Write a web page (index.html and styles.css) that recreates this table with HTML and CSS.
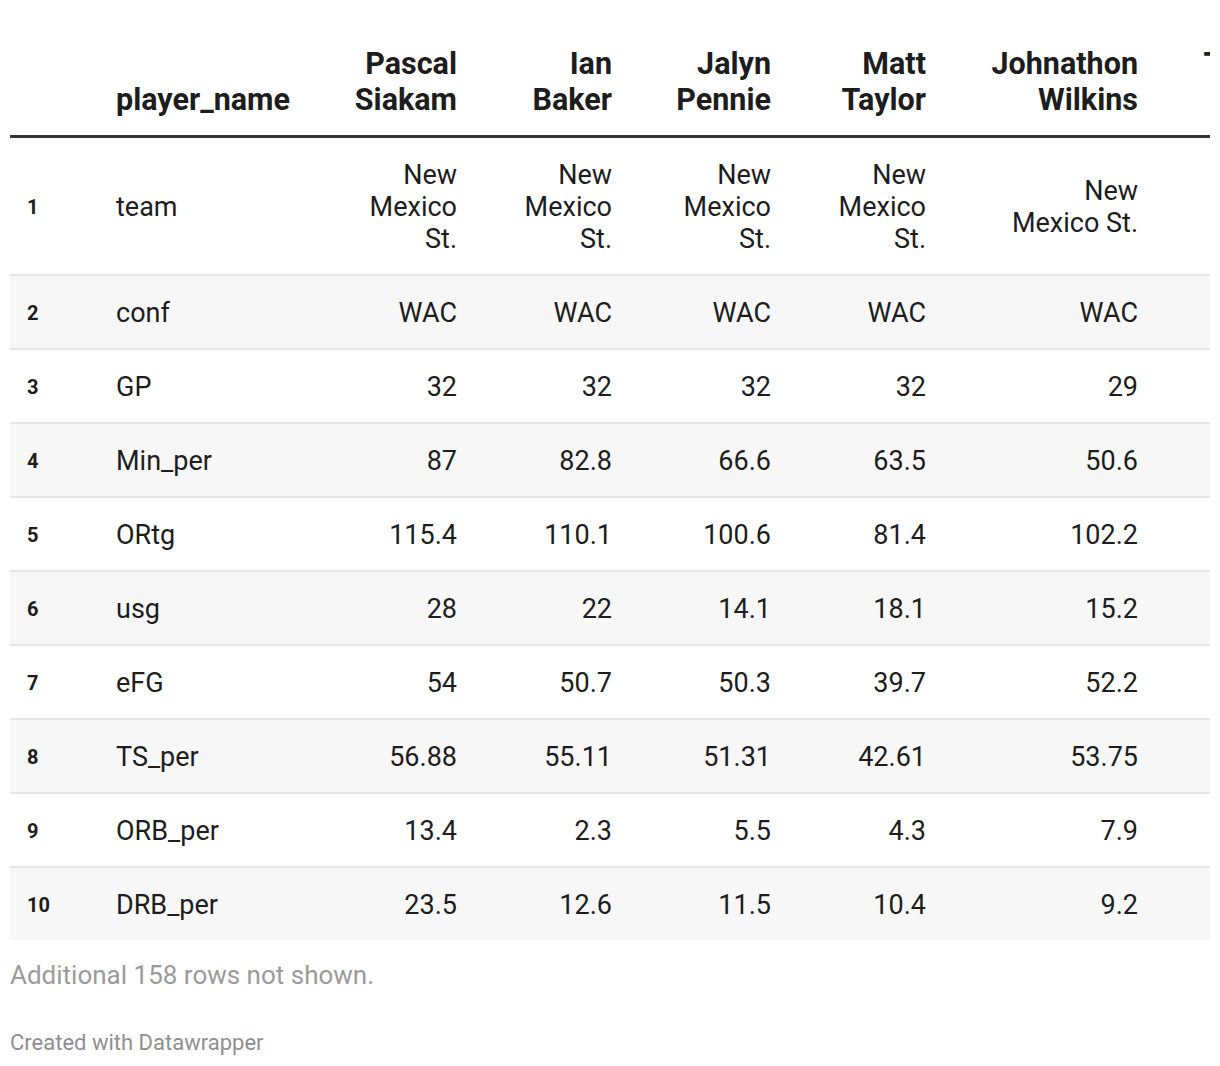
FILE: index.html
```html
<!DOCTYPE html>
<html>
<head>
<meta charset="utf-8">
<link rel="stylesheet" href="styles.css">
</head>
<body>
<div class="chart">
  <div class="table-wrap">
    <table class="dw-table">
      <colgroup>
        <col class="c-idx"><col class="c-label"><col class="c-p1"><col class="c-p2"><col class="c-p3"><col class="c-p4"><col class="c-p5"><col class="c-p6">
      </colgroup>
      <thead>
        <tr>
          <th class="idx"></th>
          <th class="label">player_name</th>
          <th>Pascal Siakam</th>
          <th>Ian Baker</th>
          <th>Jalyn Pennie</th>
          <th>Matt Taylor</th>
          <th>Johnathon Wilkins</th>
          <th>Tanveer Bhullar</th>
        </tr>
      </thead>
      <tbody>
        <tr><td class="idx">1</td><td class="label">team</td><td>New Mexico St.</td><td>New Mexico St.</td><td>New Mexico St.</td><td>New Mexico St.</td><td>New Mexico St.</td><td>New Mexico St.</td></tr>
        <tr><td class="idx">2</td><td class="label">conf</td><td>WAC</td><td>WAC</td><td>WAC</td><td>WAC</td><td>WAC</td><td>WAC</td></tr>
        <tr><td class="idx">3</td><td class="label">GP</td><td>32</td><td>32</td><td>32</td><td>32</td><td>29</td><td>19</td></tr>
        <tr><td class="idx">4</td><td class="label">Min_per</td><td>87</td><td>82.8</td><td>66.6</td><td>63.5</td><td>50.6</td><td>22.3</td></tr>
        <tr><td class="idx">5</td><td class="label">ORtg</td><td>115.4</td><td>110.1</td><td>100.6</td><td>81.4</td><td>102.2</td><td>98.1</td></tr>
        <tr><td class="idx">6</td><td class="label">usg</td><td>28</td><td>22</td><td>14.1</td><td>18.1</td><td>15.2</td><td>21</td></tr>
        <tr><td class="idx">7</td><td class="label">eFG</td><td>54</td><td>50.7</td><td>50.3</td><td>39.7</td><td>52.2</td><td>50</td></tr>
        <tr><td class="idx">8</td><td class="label">TS_per</td><td>56.88</td><td>55.11</td><td>51.31</td><td>42.61</td><td>53.75</td><td>53.3</td></tr>
        <tr><td class="idx">9</td><td class="label">ORB_per</td><td>13.4</td><td>2.3</td><td>5.5</td><td>4.3</td><td>7.9</td><td>10.2</td></tr>
        <tr><td class="idx">10</td><td class="label">DRB_per</td><td>23.5</td><td>12.6</td><td>11.5</td><td>10.4</td><td>9.2</td><td>14.1</td></tr>
      </tbody>
    </table>
  </div>
  <p class="notes">Additional 158 rows not shown.</p>
  <p class="credit">Created with Datawrapper</p>
</div>
</body>
</html>
```

FILE: styles.css
```css
html, body {
  margin: 0;
  padding: 0;
  background: #ffffff;
}

body {
  font-family: Roboto, "Liberation Sans", Arial, sans-serif;
  color: #1d1d1d;
}

.chart {
  padding: 10px 10px 0 10px;
}

.table-wrap {
  width: 1200px;
  overflow: hidden;
}

.dw-table {
  border-collapse: collapse;
  table-layout: fixed;
  width: 1303px;
}

.c-idx { width: 90px; }
.c-label { width: 200px; }
.c-p1 { width: 157px; }
.c-p2 { width: 155px; }
.c-p3 { width: 159px; }
.c-p4 { width: 155px; }
.c-p5 { width: 212px; }
.c-p6 { width: 175px; }

.dw-table th,
.dw-table td {
  padding: 21px 0 19px 65px;
  text-align: right;
  font-size: 27px;
  line-height: 32px;
  vertical-align: middle;
}

.dw-table th {
  font-size: 30.5px;
  font-weight: 700;
  line-height: 36px;
  vertical-align: bottom;
  padding-top: 36px;
  padding-bottom: 17px;
  padding-left: 40px;
  border-bottom: 3px solid #333333;
  color: #1d1d1d;
}

.dw-table td {
  border-top: 2px solid #e6e6e6;
}

.dw-table tbody tr:first-child td {
  border-top: none;
}

.dw-table tbody tr:nth-child(even) td {
  background: #f7f7f7;
}

.dw-table .idx {
  padding-left: 17px;
  text-align: left;
  font-size: 20px;
  font-weight: 700;
}

.dw-table .label {
  padding-left: 16px;
  text-align: left;
}

.notes {
  margin: 19px 0 0 0;
  font-size: 26px;
  line-height: 32px;
  color: #9a9a9a;
}

.credit {
  margin: 38px 0 0 0;
  font-size: 22px;
  line-height: 28px;
  color: #8f8f8f;
}
```
